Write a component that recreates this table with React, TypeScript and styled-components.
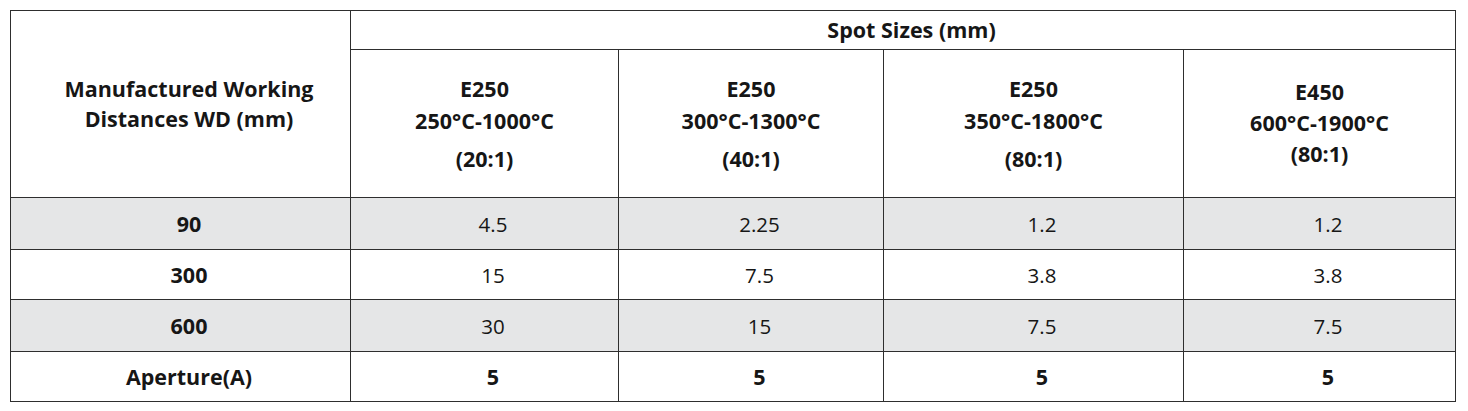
import React from "react";
import styled, { createGlobalStyle } from "styled-components";

const GlobalStyle = createGlobalStyle`
  html, body {
    margin: 0;
    padding: 0;
    background: #ffffff;
  }
  body {
    font-family: "Open Sans", "Lato", sans-serif;
    color: #161616;
  }
`;

const Page = styled.div`
  padding: 10px 13px 10px 10px;
`;

const Table = styled.table`
  width: 1445px;
  border-collapse: collapse;
  table-layout: fixed;
  border: 1px solid #6b6b6b;
`;

const Col = styled.col<{ $w: number }>`
  width: ${(p) => p.$w}px;
`;

const Row = styled.tr<{ $shade?: boolean; $h: number }>`
  height: ${(p) => p.$h}px;
  background: ${(p) => (p.$shade ? "#e5e6e7" : "#ffffff")};
`;

const Cell = styled.td<{ $bold?: boolean }>`
  border: 1px solid #2e2e2e;
  padding: 0 0 0 17px;
  text-align: center;
  vertical-align: middle;
  font-size: ${(p) => (p.$bold ? 21.5 : 20.5)}px;
  font-weight: ${(p) => (p.$bold ? 700 : 400)};
  line-height: 26px;
`;

const HeadCell = styled.th<{ $inset?: boolean }>`
  border: 1px solid #2e2e2e;
  padding: 0 0 0 ${(p) => (p.$inset ? 17 : 0)}px;
  text-align: center;
  vertical-align: middle;
  font-size: 21.5px;
  font-weight: 700;
  line-height: 30px;
`;

const Line = styled.div<{ $gap?: number; $lh?: number; $shift?: number }>`
  line-height: ${(p) => p.$lh ?? 32}px;
  margin-top: ${(p) => p.$gap ?? 0}px;
`;

const Stack = styled.div<{ $lift: number }>`
  margin-top: ${(p) => -p.$lift}px;
`;

type Model = { name: string; range: string; ratio: string; gap: number; lh: number; lift: number };

const models: Model[] = [
  { name: "E250", range: "250°C-1000°C", ratio: "(20:1)", gap: 6, lh: 32, lift: 0 },
  { name: "E250", range: "300°C-1300°C", ratio: "(40:1)", gap: 6, lh: 32, lift: 0 },
  { name: "E250", range: "350°C-1800°C", ratio: "(80:1)", gap: 6, lh: 32, lift: 0 },
  { name: "E450", range: "600°C-1900°C", ratio: "(80:1)", gap: 0, lh: 31, lift: 3 },
];

const rows: { wd: string; values: string[]; shade: boolean; h: number; bold?: boolean }[] = [
  { wd: "90", values: ["4.5", "2.25", "1.2", "1.2"], shade: true, h: 52 },
  { wd: "300", values: ["15", "7.5", "3.8", "3.8"], shade: false, h: 50 },
  { wd: "600", values: ["30", "15", "7.5", "7.5"], shade: true, h: 52 },
  { wd: "Aperture(A)", values: ["5", "5", "5", "5"], shade: false, h: 50, bold: true },
];

export default function App() {
  return (
    <Page>
      <GlobalStyle />
      <Table>
        <colgroup>
          <Col $w={340} />
          <Col $w={268} />
          <Col $w={265} />
          <Col $w={300} />
          <Col $w={272} />
        </colgroup>
        <thead>
          <Row $h={39}>
            <HeadCell rowSpan={2} $inset>
              Manufactured Working
              <br />
              Distances WD (mm)
            </HeadCell>
            <HeadCell colSpan={4} $inset>
              Spot Sizes (mm)
            </HeadCell>
          </Row>
          <Row $h={148}>
            {models.map((m, i) => (
              <HeadCell key={i}>
                <Stack $lift={m.lift}>
                  <Line $lh={m.lh}>{m.name}</Line>
                  <Line $lh={m.lh}>{m.range}</Line>
                  <Line $lh={m.lh} $gap={m.gap}>
                    {m.ratio}
                  </Line>
                </Stack>
              </HeadCell>
            ))}
          </Row>
        </thead>
        <tbody>
          {rows.map((r) => (
            <Row key={r.wd} $shade={r.shade} $h={r.h}>
              <Cell $bold>{r.wd}</Cell>
              {r.values.map((v, i) => (
                <Cell key={i} $bold={r.bold}>
                  {v}
                </Cell>
              ))}
            </Row>
          ))}
        </tbody>
      </Table>
    </Page>
  );
}
